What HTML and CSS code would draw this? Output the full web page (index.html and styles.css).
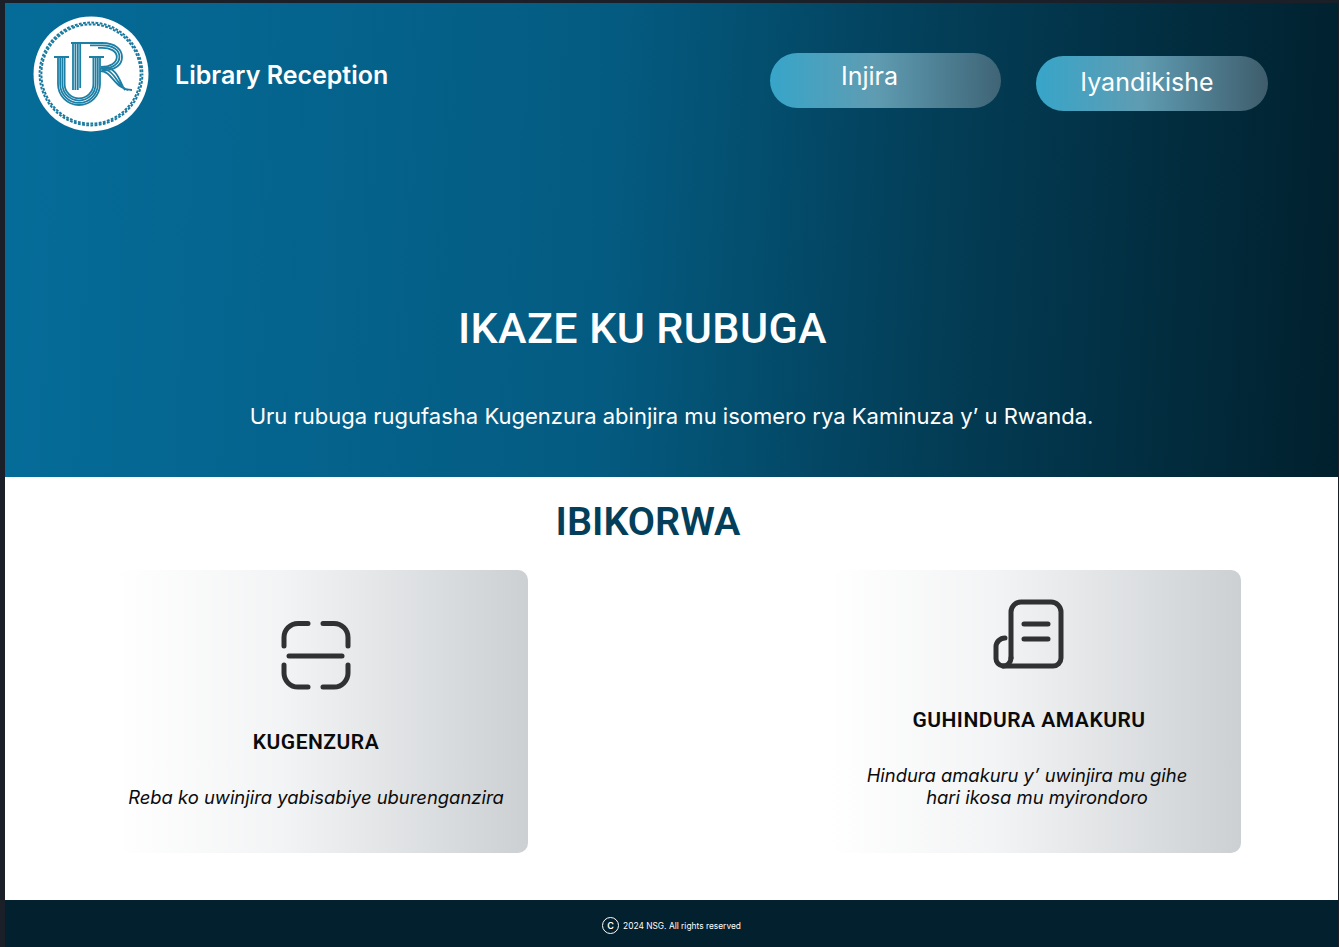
FILE: index.html
```html
<!DOCTYPE html>
<html lang="en">
<head>
    <meta charset="UTF-8">
    <meta name="viewport" content="width=device-width, initial-scale=1.0">
    <title>Library Reception</title>
    <link rel="stylesheet" href="styles.css">
</head>
<body>
    <div class="page">
        <section class="hero">
            <header class="topbar">
                <div class="brand">
                    <svg class="logo" viewBox="0 0 116 116" aria-label="UR logo">
                        <circle cx="58" cy="58" r="57.5" fill="#fff"/>
                        <circle class="rope" cx="58" cy="58" r="49.6"/>
                        <circle class="rope rope-outer" cx="58" cy="58" r="51.4"/>
                        <g class="monogram" transform="translate(-33 -16)">
                            <!-- U -->
                            <path d="M58 57V84A21 21 0 0 0 100 84V57"/>
                            <path d="M60.2 57V84A18.8 18.8 0 0 0 97.8 84V57"/>
                            <path d="M62.4 57V84A16.6 16.6 0 0 0 95.6 84V57"/>
                            <path d="M64.6 57V84A14.4 14.4 0 0 0 93.4 84V57"/>
                            <path d="M54 57H69M89 57H104"/>
                            <!-- stem and R -->
                            <path d="M73 43V90M75.4 43V90M77.8 43V90M80.2 43V88"/>
                            <path d="M71 43H102C116 43 122 50 122 57C122 65 115 70 102 71"/>
                            <path d="M90 45.400H102C113 45.400 119.400 50 119.400 57C119.400 64 112 68.400 102 69"/>
                            <path d="M98 47.800H102C110 47.800 116.800 51 116.800 57C116.800 63 110 66.800 101 67"/>
                            <path d="M100 71C113 71 114 90 132 90M100 69C116 68 117 88 128 90M101 67C119 66 120 85 125 90"/>
                        </g>
                    </svg>
                    <span class="brand-name">Library Reception</span>
                </div>
                <nav class="nav">
                    <a class="pill pill-login">Injira</a>
                    <a class="pill pill-signup">Iyandikishe</a>
                </nav>
            </header>
            <h1>IKAZE KU RUBUGA</h1>
            <p class="lead">Uru rubuga rugufasha Kugenzura abinjira mu isomero rya Kaminuza y&rsquo; u Rwanda.</p>
        </section>

        <main class="services">
            <h2>IBIKORWA</h2>
            <div class="cards">
                <article class="card">
                    <svg class="icon" viewBox="0 0 72 72">
                        <path d="M4 26V17.500A14 14 0 0 1 18 3.500H28"/>
                        <path d="M43 3.500H54A14 14 0 0 1 68 17.500V26"/>
                        <path d="M4 45V53A14 14 0 0 0 18 67H28"/>
                        <path d="M43 67H54A14 14 0 0 0 68 53V45"/>
                        <path d="M9 36H62"/>
                    </svg>
                    <h3>KUGENZURA</h3>
                    <p>Reba ko uwinjira yabisabiye uburenganzira</p>
                </article>
                <article class="card card-edit">
                    <svg class="icon" viewBox="0 0 72 72">
                        <path d="M18 60V14A10 10 0 0 1 28 4H58A10 10 0 0 1 68 14V60A8 8 0 0 1 60 68H10A7.500 7.500 0 0 1 3 60V49A9 9 0 0 1 12 40"/>
                        <path d="M18 60A8 8 0 0 1 10 68"/>
                        <path d="M31 26H55M31 41H55"/>
                    </svg>
                    <h3>GUHINDURA AMAKURU</h3>
                    <p>Hindura amakuru y&rsquo; uwinjira mu gihe <span class="shifted">hari ikosa mu myirondoro</span></p>
                </article>
            </div>
        </main>

        <footer class="footer">
            <span class="copy-mark">C</span>
            <span>2024 NSG. All rights reserved</span>
        </footer>
    </div>
</body>
</html>
```

FILE: styles.css
```css
html, body {
    margin: 0;
    height: 100%;
}
body {
    background: #1a1f28;
    font-family: Inter, "Liberation Sans", sans-serif;
    overflow: hidden;
}
.page {
    display: flex;
    flex-direction: column;
    height: 944px;
    margin: 3px 1px 0 5px;
}
.hero {
    height: 474px;
    background: linear-gradient(93deg, #056c99 0%, #045b81 45%, #033d56 70%, #01202d 100%);
    color: #fff;
    text-align: center;
}
.topbar {
    display: flex;
    justify-content: space-between;
    padding: 13px 70px 0 28px;
    height: 128px;
    box-sizing: border-box;
    text-align: left;
}
.brand {
    display: flex;
    align-items: flex-start;
    gap: 26px;
}
.logo {
    width: 116px;
    height: 116px;
}
.rope {
    fill: none;
    stroke: #1b7aa0;
    stroke-width: 2;
    stroke-dasharray: 2.800 1.400;
}
.rope-outer {
    stroke-dashoffset: 1.400;
}
.monogram path {
    fill: none;
    stroke: #1d7fa5;
    stroke-width: 1.800;
}
.brand-name {
    font-size: 25px;
    font-weight: 600;
    line-height: 30px;
    margin-top: 44px;
}
.nav {
    display: flex;
    align-items: flex-start;
    gap: 35px;
}
.pill {
    display: block;
    height: 55px;
    box-sizing: border-box;
    border-radius: 28px;
    background: linear-gradient(90deg, #37a5c9 0%, #5f9cb2 45%, rgba(103, 128, 142, 0.6) 100%);
    color: #fff;
    text-align: center;
    font-size: 25px;
    line-height: 32px;
}
.pill-login {
    width: 231px;
    margin-top: 37px;
    padding: 7px 32px 0 0;
}
.pill-signup {
    width: 232px;
    margin-top: 40px;
    padding: 10px 10px 0 0;
}
h1 {
    margin: 169px 0 0;
    padding-right: 58px;
    font-family: Roboto, sans-serif;
    font-size: 43px;
    font-weight: 500;
    line-height: 56px;
    letter-spacing: 0.4px;
}
.lead {
    margin: 45px 0 0;
    font-size: 22px;
    line-height: 30px;
}
.services {
    flex: 1;
    background: #fff;
    text-align: center;
}
h2 {
    margin: 21px 0 0;
    padding-right: 47px;
    font-family: Roboto, sans-serif;
    font-size: 39.500px;
    font-weight: 600;
    line-height: 48px;
    color: #033f5a;
}
.cards {
    display: flex;
    justify-content: space-between;
    margin-top: 24px;
    padding: 0 97px 0 110px;
}
.card {
    display: flex;
    flex-direction: column;
    justify-content: flex-end;
    align-items: center;
    width: 413px;
    height: 283px;
    box-sizing: border-box;
    padding: 0 11px 45px 0;
    border-radius: 10px;
    background: linear-gradient(90deg, #fff 0%, #f3f4f5 40%, #ccd0d3 100%);
}
.icon {
    width: 72px;
    height: 72px;
    fill: none;
    stroke: #2f3133;
    stroke-width: 5;
    stroke-linecap: round;
}
.card h3 {
    margin: 35px 0 0;
    font-family: Roboto, sans-serif;
    font-size: 21px;
    font-weight: 600;
    line-height: 30px;
    letter-spacing: 0.5px;
    color: #0b0b0b;
}
.card p {
    margin: 29px 0 0;
    font-size: 18.400px;
    font-style: italic;
    line-height: 22px;
    color: #0b0b0b;
}
.card-edit p {
    margin-right: 4px;
}
.shifted {
    display: block;
    margin-left: 20px;
}
.footer {
    display: flex;
    justify-content: center;
    align-items: center;
    gap: 4px;
    height: 47px;
    padding-top: 4px;
    box-sizing: border-box;
    background: #03202e;
    color: #fff;
    font-size: 8.400px;
}
.copy-mark {
    display: flex;
    justify-content: center;
    align-items: center;
    width: 17px;
    height: 17px;
    border: 1px solid #fff;
    border-radius: 50%;
    box-sizing: border-box;
    font-size: 9px;
    font-weight: 600;
}
```
